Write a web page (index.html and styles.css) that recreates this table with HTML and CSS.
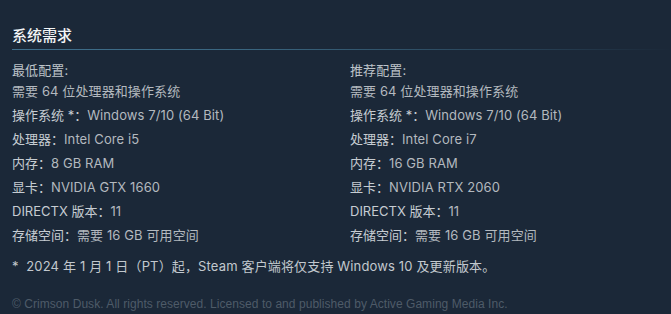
FILE: index.html
```html
<!DOCTYPE html>
<html lang="zh-CN">
<head>
<meta charset="utf-8">
<link rel="stylesheet" href="styles.css">
</head>
<body>
<div class="sysreq">
  <h2 class="title">系统需求</h2>
  <div class="cols">
    <div class="col">
      <ul class="list">
        <li class="head">最低配置:</li>
        <li class="intro">需要 64 位处理器和操作系统</li>
        <li><span class="lbl">操作系统 *：</span>Windows 7/10 (64 Bit)</li>
        <li><span class="lbl">处理器：</span>Intel Core i5</li>
        <li><span class="lbl">内存：</span>8 GB RAM</li>
        <li><span class="lbl">显卡：</span>NVIDIA GTX 1660</li>
        <li><span class="lbl">DirectX 版本：</span>11</li>
        <li><span class="lbl">存储空间：</span>需要 16 GB 可用空间</li>
      </ul>
    </div>
    <div class="col">
      <ul class="list">
        <li class="head">推荐配置:</li>
        <li class="intro">需要 64 位处理器和操作系统</li>
        <li><span class="lbl">操作系统 *：</span>Windows 7/10 (64 Bit)</li>
        <li><span class="lbl">处理器：</span>Intel Core i7</li>
        <li><span class="lbl">内存：</span>16 GB RAM</li>
        <li><span class="lbl">显卡：</span>NVIDIA RTX 2060</li>
        <li><span class="lbl">DirectX 版本：</span>11</li>
        <li><span class="lbl">存储空间：</span>需要 16 GB 可用空间</li>
      </ul>
    </div>
  </div>
  <p class="note">*&nbsp; 2024 年 1 月 1 日（PT）起，Steam 客户端将仅支持 Windows 10 及更新版本。</p>
  <p class="legal">© Crimson Dusk. All rights reserved. Licensed to and published by Active Gaming Media Inc.</p>
</div>
</body>
</html>
```

FILE: styles.css
```css
html, body {
  margin: 0;
  padding: 0;
  background: #1b2838;
}
body {
  font-family: "Inter", "Noto Sans CJK SC", sans-serif;
  color: #b3b9bf;
}
.sysreq {
  padding: 25px 0 0 12px;
}
.title {
  margin: 0;
  font-family: "Noto Sans CJK SC", sans-serif;
  font-size: 15px;
  font-weight: 500;
  color: #f2f4f5;
  line-height: 20px;
  padding-bottom: 4px;
  border-bottom: 1px solid transparent;
  border-image: linear-gradient(to right, #3f6f8c 0%, #3a6680 35%, rgba(52,90,115,0.55) 75%, rgba(40,60,80,0) 100%) 1;
}
.cols {
  display: grid;
  grid-template-columns: 338px 1fr;
  margin-top: 11px;
}
.list {
  list-style: none;
  margin: 0;
  padding: 0;
  font-size: 13px;
  line-height: 24px;
  letter-spacing: 0.1px;
}
.list .head {
  line-height: 18px;
  color: #bdc3c9;
}
.list .intro {
  color: #b3b9bf;
}
.lbl {
  color: #c6ccd2;
  text-transform: uppercase;
  letter-spacing: 0;
}
.note {
  margin: 7px 0 0 0;
  font-size: 13px;
  line-height: 24px;
  color: #c2c8ce;
  letter-spacing: 0.15px;
}
.legal {
  margin: 18px 0 0 0;
  font-family: "Liberation Sans", Arial, sans-serif;
  font-size: 12px;
  line-height: 16px;
  letter-spacing: 0.05px;
  color: #4e5b68;
}
```
